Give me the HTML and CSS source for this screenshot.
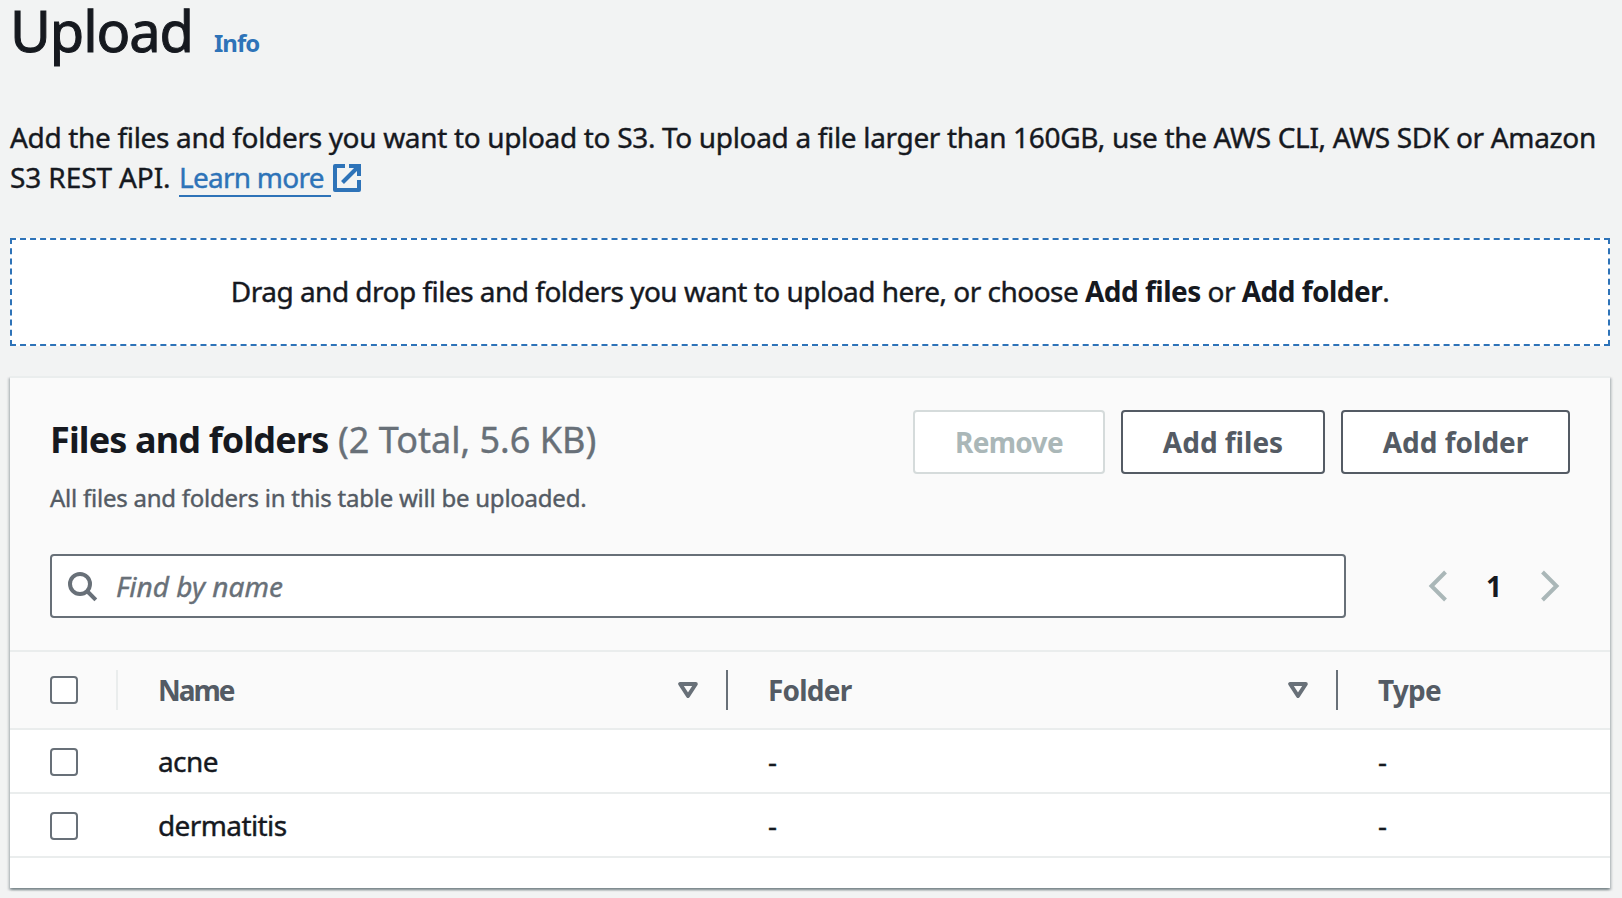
FILE: index.html
```html
<!DOCTYPE html>
<html lang="en">
<head>
<meta charset="utf-8">
<title>Upload</title>
<link rel="stylesheet" href="styles.css">
</head>
<body>
<main class="page">
  <header class="title-row">
    <h1 class="title">Upload</h1>
    <a class="info">Info</a>
  </header>
  <p class="intro"><span class="intro-line">Add the files and folders you want to upload to S3. To upload a file larger than 160GB, use the AWS CLI, AWS SDK or Amazon</span><br><span class="intro-rest">S3 REST API. </span><a class="learn">Learn more</a><svg class="external" width="28" height="28" viewBox="0 0 28 28" fill="none" stroke="currentColor" stroke-width="4"><path d="M12 2H2v24h24V16" stroke-linejoin="round"/><path d="M16 2h10v10"/><path d="M26 2 9.500 18.500"/></svg></p>

  <section class="dropzone"><span class="drop-text">Drag and drop files and folders you want to upload here, or choose <b>Add files</b> or <b>Add folder</b>.</span></section>

  <section class="panel">
    <div class="panel-head">
      <div class="head-row">
        <div class="heading-block">
          <h2 class="heading"><span class="heading-name">Files and folders</span><span class="count">(2 Total, 5.6 KB)</span></h2>
          <p class="description">All files and folders in this table will be uploaded.</p>
        </div>
        <div class="actions">
          <button class="btn btn-remove" disabled>Remove</button>
          <button class="btn btn-files">Add files</button>
          <button class="btn btn-folder">Add folder</button>
        </div>
      </div>
      <div class="filter-row">
        <div class="search">
          <svg width="32" height="32" viewBox="0 0 32 32" fill="none" stroke="currentColor" stroke-width="4"><circle cx="12" cy="14" r="10"/><path d="m19 21 8.800 8.800"/></svg>
          <span class="placeholder">Find by name</span>
        </div>
        <nav class="pager">
          <svg width="20" height="32" viewBox="0 0 20 32" fill="none" stroke="currentColor" stroke-width="4"><path d="M17.500 2 3.500 16l14 14"/></svg>
          <span class="page-number">1</span>
          <svg width="20" height="32" viewBox="0 0 20 32" fill="none" stroke="currentColor" stroke-width="4"><path d="m2.500 2 14 14-14 14"/></svg>
        </nav>
      </div>
    </div>
    <div class="row row-head">
      <div class="cell-check"><span class="checkbox"></span></div>
      <div class="cell sortable"><span class="name-label">Name</span><svg width="20" height="16" viewBox="0 0 20 16" fill="none" stroke="currentColor" stroke-width="4" stroke-linejoin="round"><path d="M2.200 2h15.600L10 14z"/></svg></div>
      <div class="cell sortable"><span class="folder-label">Folder</span><svg width="20" height="16" viewBox="0 0 20 16" fill="none" stroke="currentColor" stroke-width="4" stroke-linejoin="round"><path d="M2.200 2h15.600L10 14z"/></svg></div>
      <div class="cell"><span class="type-label">Type</span></div>
    </div>
    <div class="row">
      <div class="cell-check"><span class="checkbox"></span></div>
      <div class="cell">acne</div><div class="cell">-</div><div class="cell">-</div>
    </div>
    <div class="row">
      <div class="cell-check"><span class="checkbox"></span></div>
      <div class="cell">dermatitis</div><div class="cell">-</div><div class="cell">-</div>
    </div>
  </section>
</main>
</body>
</html>
```
FILE: styles.css
```css
* { box-sizing: border-box; }
body {
  margin: 0;
  background: #f2f3f3;
  color: #16191f;
  font: 400 28px/40px "Noto Sans", "Open Sans", sans-serif;
  -webkit-text-stroke: 0.4px;
}
b, .info, .heading-name, .btn, .row-head, .page-number { -webkit-text-stroke: 0; }
h1, h2, p { margin: 0; font-weight: 400; }
.page { height: 898px; padding: 0 12px 0 10px; }

.title-row { display: flex; align-items: baseline; height: 117px; white-space: nowrap; }
.title { width: 204px; font-size: 56px; line-height: 60px; letter-spacing: -1.1px; -webkit-text-stroke: 1px; }
.info { color: #2e73b8; font-size: 24px; font-weight: 700; letter-spacing: -1px; }

.intro { height: 121px; white-space: nowrap; }
.intro-line { letter-spacing: -0.33px; }
.intro-rest { display: inline-block; width: 169px; letter-spacing: -0.1px; }
.learn {
  display: inline-block;
  width: 152px;
  height: 40px;
  border-bottom: 2px solid #2e73b8;
  color: #2e73b8;
  letter-spacing: -0.75px;
}
.external { margin-left: 2px; color: #2e73b8; vertical-align: -4px; }

.dropzone {
  display: flex;
  align-items: center;
  justify-content: center;
  height: 108px;
  padding-bottom: 2px;
  border: 2px dashed #2e73b8;
  background: #fff;
  white-space: nowrap;
}
.drop-text { letter-spacing: -0.52px; }

.panel {
  height: 512px;
  margin-top: 30px;
  border-top: 2px solid #eaeded;
  background: #fff;
  box-shadow: 0 2px 2px rgba(0, 28, 36, .3), 2px 2px 2px rgba(0, 28, 36, .15), -2px 2px 2px rgba(0, 28, 36, .15);
}
.panel-head {
  height: 274px;
  padding: 32px 40px 0;
  border-bottom: 2px solid #eaeded;
  background: #fafafa;
}
.head-row { display: flex; justify-content: space-between; height: 144px; }
.heading-block { padding-top: 6px; }
.heading { display: flex; font-size: 36px; line-height: 48px; white-space: nowrap; }
.heading-name { width: 288px; font-weight: 700; letter-spacing: -0.85px; }
.count { color: #687078; letter-spacing: 0; }
.description { margin-top: 18px; color: #545b64; font-size: 24px; line-height: 32px; letter-spacing: -0.24px; }
.actions { display: flex; gap: 16px; }
.btn {
  height: 64px;
  padding: 0;
  border: 2px solid #545b64;
  border-radius: 4px;
  background: #fff;
  color: #545b64;
  font: inherit;
  font-weight: 700;
}
.btn-remove { width: 192px; border-color: #d5dbdb; color: #aab7b8; letter-spacing: -0.7px; }
.btn-files { width: 204px; }
.btn-folder { width: 229px; }

.filter-row { display: flex; justify-content: space-between; padding-right: 10px; }
.search {
  display: flex;
  align-items: center;
  gap: 16px;
  width: 1296px;
  height: 64px;
  padding-left: 16px;
  border: 2px solid #687078;
  border-radius: 4px;
  background: #fff;
  color: #687078;
}
.placeholder { font-style: italic; }
.pager { display: flex; align-items: center; justify-content: space-between; width: 132px; color: #aab7b8; }
.page-number { color: #16191f; font-weight: 700; }

.row {
  display: grid;
  grid-template-columns: 108px 610px 610px 1fr;
  height: 64px;
  border-bottom: 2px solid #eaeded;
}
.row-head { height: 78px; background: #fafafa; color: #545b64; font-weight: 700; }
.cell-check { display: flex; align-items: center; padding: 2px 0 0 40px; }
.checkbox { width: 28px; height: 28px; border: 2px solid #687078; border-radius: 4px; background: #fff; }
.cell { display: flex; align-items: center; padding-left: 40px; letter-spacing: -0.6px; }
.row-head .cell-check, .row-head .cell { height: 40px; margin-top: 18px; padding-top: 0; }
.row-head .cell-check { border-right: 2px solid #eaeded; }
.sortable { justify-content: space-between; padding-right: 28px; border-right: 2px solid #687078; color: #545b64; }
.sortable svg { color: #687078; }
.name-label { letter-spacing: -2px; }
.folder-label { letter-spacing: -0.8px; }
.type-label { letter-spacing: -0.8px; }
```
